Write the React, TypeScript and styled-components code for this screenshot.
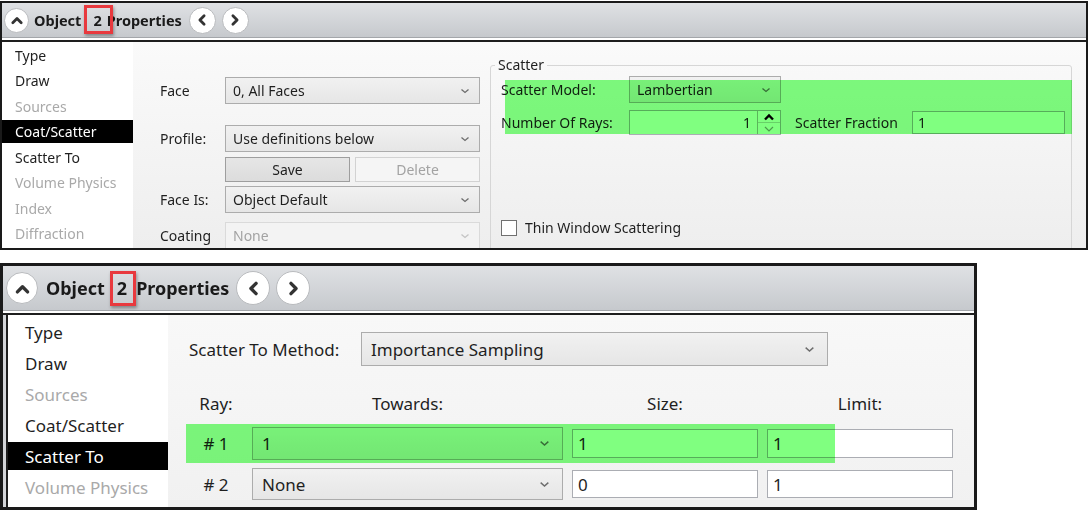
import React from "react";
import styled, { createGlobalStyle } from "styled-components";

const GlobalStyle = createGlobalStyle`
  html, body { margin: 0; padding: 0; background: #ffffff; }
  body {
    width: 1090px; height: 510px; overflow: hidden;
    font-family: "Noto Sans", "Open Sans", "DejaVu Sans", sans-serif;
    color: #1f1f1f;
  }
  * { box-sizing: border-box; }
`;

const Page = styled.div`
  display: flex;
  flex-direction: column;
  align-items: flex-start;
  padding-top: 1px;
  gap: 13px;
`;

const Panel = styled.section<{ $w: number; $h: number; $bw: number }>`
  position: relative;
  width: ${(p) => p.$w}px;
  height: ${(p) => p.$h}px;
  border: ${(p) => p.$bw}px solid #1a1a1a;
  display: flex;
  flex-direction: column;
  overflow: hidden;
  background: #fff;
`;

const TitleBar = styled.header<{ $h: number; $pl: number }>`
  height: ${(p) => p.$h}px;
  flex-shrink: 0;
  display: flex;
  align-items: center;
  padding-left: ${(p) => p.$pl}px;
  background: linear-gradient(#dfe1e4, #c6c9cd);
  border-bottom: 1px solid #a3a6aa;
`;

const Divider = styled.div`
  height: 4px;
  flex-shrink: 0;
  background: linear-gradient(#ffffff 0 50%, #1e1e1e 50%);
`;

const CircleBtn = styled.span<{ $d: number; $ml?: number }>`
  width: ${(p) => p.$d}px;
  height: ${(p) => p.$d}px;
  margin-left: ${(p) => p.$ml ?? 0}px;
  border-radius: 50%;
  background: #ffffff;
  border: 1px solid #b9bbbe;
  display: inline-flex;
  align-items: center;
  justify-content: center;
  flex-shrink: 0;
`;

const TitleText = styled.span<{ $fs: number; $ml?: number }>`
  font-size: ${(p) => p.$fs}px;
  font-weight: 700;
  color: #1a1a1a;
  margin-left: ${(p) => p.$ml ?? 0}px;
  white-space: nowrap;
`;

const Marked = styled.span<{ $l: number; $r: number; $t: number; $b: number }>`
  position: relative;
  display: inline-block;
  &::after {
    content: "";
    position: absolute;
    left: ${(p) => -p.$l}px;
    right: ${(p) => -p.$r}px;
    top: ${(p) => -p.$t}px;
    bottom: ${(p) => -p.$b}px;
    border: 3px solid #e8393e;
    box-shadow: 1px 2px 3px rgba(0, 0, 0, 0.35);
  }
`;

const Body = styled.div<{ $inset?: boolean }>`
  flex: 1;
  display: flex;
  min-height: 0;
  background: ${(p) => (p.$inset ? "#d3d5d8" : "transparent")};
  padding-left: ${(p) => (p.$inset ? 3 : 0)}px;
`;

const BodyInner = styled.div<{ $inset?: boolean }>`
  flex: 1;
  display: flex;
  min-height: 0;
  border-left: ${(p) => (p.$inset ? "2px solid #1e1e1e" : "none")};
`;

const Nav = styled.nav<{ $w: number; $pt: number }>`
  width: ${(p) => p.$w}px;
  flex-shrink: 0;
  background: #ffffff;
  padding-top: ${(p) => p.$pt}px;
  display: flex;
  flex-direction: column;
`;

type ItemState = "normal" | "disabled" | "selected";

const NavItem = styled.div<{ $h: number; $mb: number; $fs: number; $pl: number; $state: ItemState }>`
  height: ${(p) => p.$h}px;
  margin-bottom: ${(p) => p.$mb}px;
  padding-left: ${(p) => p.$pl}px;
  font-size: ${(p) => p.$fs}px;
  display: flex;
  align-items: center;
  white-space: nowrap;
  flex-shrink: 0;
  background: ${(p) => (p.$state === "selected" ? "#000000" : "transparent")};
  color: ${(p) => (p.$state === "selected" ? "#ffffff" : p.$state === "disabled" ? "#a9a9a9" : "#1f1f1f")};
`;

const SelectBox = styled.div<{ $w: number; $h: number; $fs: number; $pl: number; $disabled?: boolean }>`
  width: ${(p) => p.$w}px;
  height: ${(p) => p.$h}px;
  display: flex;
  align-items: center;
  justify-content: space-between;
  padding: 0 ${(p) => Math.round(p.$pl * 1.3)}px 0 ${(p) => p.$pl}px;
  border: 1px solid ${(p) => (p.$disabled ? "#dadada" : "#acacac")};
  background: ${(p) => (p.$disabled ? "#f3f3f3" : "linear-gradient(#f1f1f1, #e6e6e6)")};
  color: ${(p) => (p.$disabled ? "#a3a3a3" : "#1f1f1f")};
  font-size: ${(p) => p.$fs}px;
  white-space: nowrap;
  flex-shrink: 0;
`;

const TextInput = styled.div<{ $w: number; $h: number; $fs: number }>`
  width: ${(p) => p.$w}px;
  height: ${(p) => p.$h}px;
  display: flex;
  align-items: center;
  padding: 0 5px;
  border: 1px solid #abadb3;
  background: #ffffff;
  font-size: ${(p) => p.$fs}px;
  color: #1f1f1f;
  flex-shrink: 0;
`;

const Label = styled.span<{ $fs: number; $w?: number; $ml?: number; $center?: boolean }>`
  font-size: ${(p) => p.$fs}px;
  width: ${(p) => (p.$w ? `${p.$w}px` : "auto")};
  margin-left: ${(p) => p.$ml ?? 0}px;
  text-align: ${(p) => (p.$center ? "center" : "left")};
  color: #1f1f1f;
  white-space: nowrap;
  flex-shrink: 0;
`;

const Highlight = styled.div`
  position: absolute;
  background: #80ff80;
  mix-blend-mode: multiply;
  pointer-events: none;
`;

/* ---------- top panel parts ---------- */

const TopContent = styled.div`
  flex: 1;
  display: flex;
  gap: 10px;
  padding-left: 27px;
  background: linear-gradient(#fafafa, #eeeeee);
`;

const FormCol = styled.div`
  width: 320px;
  flex-shrink: 0;
  padding-top: 35px;
  display: flex;
  flex-direction: column;
`;

const FormRow = styled.div<{ $mt?: number }>`
  display: grid;
  grid-template-columns: 65px 255px;
  align-items: center;
  margin-top: ${(p) => p.$mt ?? 0}px;
`;

const ButtonPair = styled.div`
  display: flex;
  gap: 5px;
`;

const PushButton = styled.div<{ $disabled?: boolean }>`
  width: 125px;
  height: 25px;
  display: flex;
  align-items: center;
  justify-content: center;
  font-size: 14px;
  border: 1px solid ${(p) => (p.$disabled ? "#d2d2d2" : "#9e9e9e")};
  background: ${(p) => (p.$disabled ? "#f5f5f5" : "linear-gradient(#e6e6e6, #dcdcdc)")};
  color: ${(p) => (p.$disabled ? "#a3a3a3" : "#1f1f1f")};
`;

const Group = styled.fieldset`
  margin: 14px 0 0;
  width: 582px;
  height: 240px;
  flex-shrink: 0;
  min-width: 0;
  border: 1px solid #d6d6d6;
  border-radius: 3px;
  padding: 2px 6px 0 10px;
`;

const GroupLegend = styled.legend`
  font-size: 14px;
  line-height: 18px;
  padding: 0 3px;
  margin-left: -6px;
  color: #1f1f1f;
`;

const GroupRows = styled.div`
  position: relative;
  display: flex;
  flex-direction: column;
`;

const GRow = styled.div<{ $mt?: number }>`
  display: flex;
  align-items: center;
  margin-top: ${(p) => p.$mt ?? 0}px;
`;

const SpinBox = styled.div`
  width: 152px;
  height: 25px;
  display: flex;
  border: 1px solid #abadb3;
  background: #ffffff;
  flex-shrink: 0;
`;

const SpinValue = styled.span`
  flex: 1;
  text-align: right;
  padding-right: 6px;
  font-size: 14px;
  line-height: 23px;
`;

const SpinButtons = styled.div`
  width: 23px;
  display: flex;
  flex-direction: column;
  border-left: 1px solid #b5b5b5;
`;

const SpinHalf = styled.div<{ $top?: boolean }>`
  flex: 1;
  display: flex;
  align-items: center;
  justify-content: center;
  border-bottom: ${(p) => (p.$top ? "1px solid #d0d0d0" : "none")};
`;

const CheckRow = styled.label`
  display: flex;
  align-items: center;
  gap: 8px;
  margin-top: 83px;
  font-size: 14px;
`;

const CheckSquare = styled.span`
  width: 16px;
  height: 16px;
  border: 1px solid #707070;
  background: #ffffff;
  flex-shrink: 0;
`;

const TopHighlight = styled(Highlight)`
  left: 4px;
  top: 4px;
  width: 567px;
  height: 54px;
`;

/* ---------- bottom panel parts ---------- */

const BottomContent = styled.div`
  flex: 1;
  display: flex;
  flex-direction: column;
  padding: 17px 0 0 21px;
  background: linear-gradient(#f8f8f8, #f1f1f1);
`;

const MethodRow = styled.div`
  display: flex;
  align-items: center;
`;

const TableWrap = styled.div`
  position: relative;
  margin-top: 26px;
  display: flex;
  flex-direction: column;
`;

const TableRow = styled.div<{ $h: number; $mt?: number }>`
  display: grid;
  grid-template-columns: 54px 311px 186px 186px;
  column-gap: 9px;
  align-items: center;
  height: ${(p) => p.$h}px;
  margin-top: ${(p) => p.$mt ?? 0}px;
`;

const BottomHighlight = styled(Highlight)`
  left: -3px;
  top: 32px;
  width: 649px;
  height: 39px;
`;

/* ---------- icons ---------- */

const Chevron = ({ dir, size, color = "#333", w = 2 }: { dir: "up" | "down" | "left" | "right"; size: number; color?: string; w?: number }) => {
  const pts: Record<string, string> = {
    up: "2,7 5,4 8,7",
    down: "2,4 5,7 8,4",
    left: "6.5,2 3.5,5 6.5,8",
    right: "3.5,2 6.5,5 3.5,8",
  };
  return (
    <svg width={size} height={size} viewBox="0 0 10 10">
      <polyline points={pts[dir]} fill="none" stroke={color} strokeWidth={w} strokeLinecap="round" strokeLinejoin="round" />
    </svg>
  );
};

const DropArrow = ({ color = "#6d6d6d", size = 10 }: { color?: string; size?: number }) => (
  <svg width={size} height={size * 0.6} viewBox="0 0 10 6">
    <polyline points="1.5,1.5 5,4.5 8.5,1.5" fill="none" stroke={color} strokeWidth={1.3} />
  </svg>
);

/* ---------- composed ---------- */

const Title = ({ big }: { big?: boolean }) => {
  const fs = big ? 18 : 14.5;
  const icon = big ? 17 : 14;
  return (
    <TitleBar $h={big ? 45 : 35} $pl={big ? 3 : 2}>
      <CircleBtn $d={big ? 32 : 25}>
        <Chevron dir="up" size={icon} />
      </CircleBtn>
      <TitleText $fs={fs} $ml={big ? 8 : 5}>Object</TitleText>
      <TitleText $fs={fs} $ml={12}>
        {big ? (
          <Marked $l={7} $r={9} $t={5} $b={6}>2</Marked>
        ) : (
          <Marked $l={9} $r={11} $t={5} $b={4}>2</Marked>
        )}
      </TitleText>
      <TitleText $fs={fs} $ml={big ? 9 : 5}>Properties</TitleText>
      <CircleBtn $d={big ? 34 : 27} $ml={big ? 7 : 7}>
        <Chevron dir="left" size={icon} />
      </CircleBtn>
      <CircleBtn $d={big ? 34 : 27} $ml={big ? 6 : 6}>
        <Chevron dir="right" size={icon} />
      </CircleBtn>
    </TitleBar>
  );
};

const topNav: [string, ItemState][] = [
  ["Type", "normal"],
  ["Draw", "normal"],
  ["Sources", "disabled"],
  ["Coat/Scatter", "selected"],
  ["Scatter To", "normal"],
  ["Volume Physics", "disabled"],
  ["Index", "disabled"],
  ["Diffraction", "disabled"],
];

const bottomNav: [string, ItemState][] = [
  ["Type", "normal"],
  ["Draw", "normal"],
  ["Sources", "disabled"],
  ["Coat/Scatter", "normal"],
  ["Scatter To", "selected"],
  ["Volume Physics", "disabled"],
];

const TopPanel = () => (
  <Panel $w={1088} $h={249} $bw={2}>
    <Title />
    <Divider />
    <Body>
      <BodyInner>
        <Nav $w={131} $pt={1.5}>
          {topNav.map(([t, st]) => (
            <NavItem key={t} $h={23} $mb={2.5} $fs={14} $pl={13} $state={st}>
              {t}
            </NavItem>
          ))}
        </Nav>
        <TopContent>
          <FormCol>
            <FormRow>
              <Label $fs={14}>Face</Label>
              <SelectBox $w={255} $h={27} $fs={14} $pl={7}>
                0, All Faces <DropArrow />
              </SelectBox>
            </FormRow>
            <FormRow $mt={21}>
              <Label $fs={14}>Profile:</Label>
              <SelectBox $w={255} $h={27} $fs={14} $pl={7}>
                Use definitions below <DropArrow />
              </SelectBox>
            </FormRow>
            <FormRow $mt={5}>
              <span />
              <ButtonPair>
                <PushButton>Save</PushButton>
                <PushButton $disabled>Delete</PushButton>
              </ButtonPair>
            </FormRow>
            <FormRow $mt={4}>
              <Label $fs={14}>Face Is:</Label>
              <SelectBox $w={255} $h={27} $fs={14} $pl={7}>
                Object Default <DropArrow />
              </SelectBox>
            </FormRow>
            <FormRow $mt={9}>
              <Label $fs={14}>Coating</Label>
              <SelectBox $w={255} $h={27} $fs={14} $pl={7} $disabled>
                None <DropArrow color="#c4c4c4" />
              </SelectBox>
            </FormRow>
          </FormCol>
          <Group>
            <GroupLegend>Scatter</GroupLegend>
            <GroupRows>
              <GRow>
                <Label $fs={14} $w={128}>Scatter Model:</Label>
                <SelectBox $w={152} $h={27} $fs={14} $pl={7}>
                  Lambertian <DropArrow />
                </SelectBox>
              </GRow>
              <GRow $mt={7}>
                <Label $fs={14} $w={128}>Number Of Rays:</Label>
                <SpinBox>
                  <SpinValue>1</SpinValue>
                  <SpinButtons>
                    <SpinHalf $top>
                      <svg width="12" height="8" viewBox="0 0 12 8">
                        <polyline points="2,6.5 6,2.5 10,6.5" fill="none" stroke="#000" strokeWidth="2.4" />
                      </svg>
                    </SpinHalf>
                    <SpinHalf>
                      <svg width="12" height="8" viewBox="0 0 12 8">
                        <polyline points="2,2 6,6 10,2" fill="none" stroke="#9a9a9a" strokeWidth="1.2" />
                      </svg>
                    </SpinHalf>
                  </SpinButtons>
                </SpinBox>
                <Label $fs={14} $w={117} $ml={14}>Scatter Fraction</Label>
                <TextInput $w={153} $h={23} $fs={14}>1</TextInput>
              </GRow>
              <CheckRow>
                <CheckSquare />
                Thin Window Scattering
              </CheckRow>
              <TopHighlight />
            </GroupRows>
          </Group>
        </TopContent>
      </BodyInner>
    </Body>
  </Panel>
);

const BottomPanel = () => (
  <Panel $w={977} $h={247} $bw={3}>
    <Title big />
    <Divider />
    <Body $inset>
      <BodyInner $inset>
        <Nav $w={160} $pt={3}>
          {bottomNav.map(([t, st]) => (
            <NavItem key={t} $h={28} $mb={3} $fs={17} $pl={17} $state={st}>
              {t}
            </NavItem>
          ))}
        </Nav>
        <BottomContent>
          <MethodRow>
            <Label $fs={17} $w={172}>Scatter To Method:</Label>
            <SelectBox $w={467} $h={34} $fs={17} $pl={9}>
              Importance Sampling <DropArrow size={11} />
            </SelectBox>
          </MethodRow>
          <TableWrap>
            <TableRow $h={22}>
              <Label $fs={17} $center>Ray:</Label>
              <Label $fs={17} $center>Towards:</Label>
              <Label $fs={17} $center>Size:</Label>
              <Label $fs={17} $center>Limit:</Label>
            </TableRow>
            <TableRow $h={33} $mt={13}>
              <Label $fs={17} $center># 1</Label>
              <SelectBox $w={311} $h={33} $fs={17} $pl={9}>
                1 <DropArrow size={11} />
              </SelectBox>
              <TextInput $w={186} $h={29} $fs={17}>1</TextInput>
              <TextInput $w={186} $h={29} $fs={17}>1</TextInput>
            </TableRow>
            <TableRow $h={32} $mt={8}>
              <Label $fs={17} $center># 2</Label>
              <SelectBox $w={311} $h={32} $fs={17} $pl={9}>
                None <DropArrow size={11} />
              </SelectBox>
              <TextInput $w={186} $h={28} $fs={17}>0</TextInput>
              <TextInput $w={186} $h={28} $fs={17}>1</TextInput>
            </TableRow>
            <BottomHighlight />
          </TableWrap>
        </BottomContent>
      </BodyInner>
    </Body>
  </Panel>
);

export default function App() {
  return (
    <>
      <GlobalStyle />
      <Page>
        <TopPanel />
        <BottomPanel />
      </Page>
    </>
  );
}
